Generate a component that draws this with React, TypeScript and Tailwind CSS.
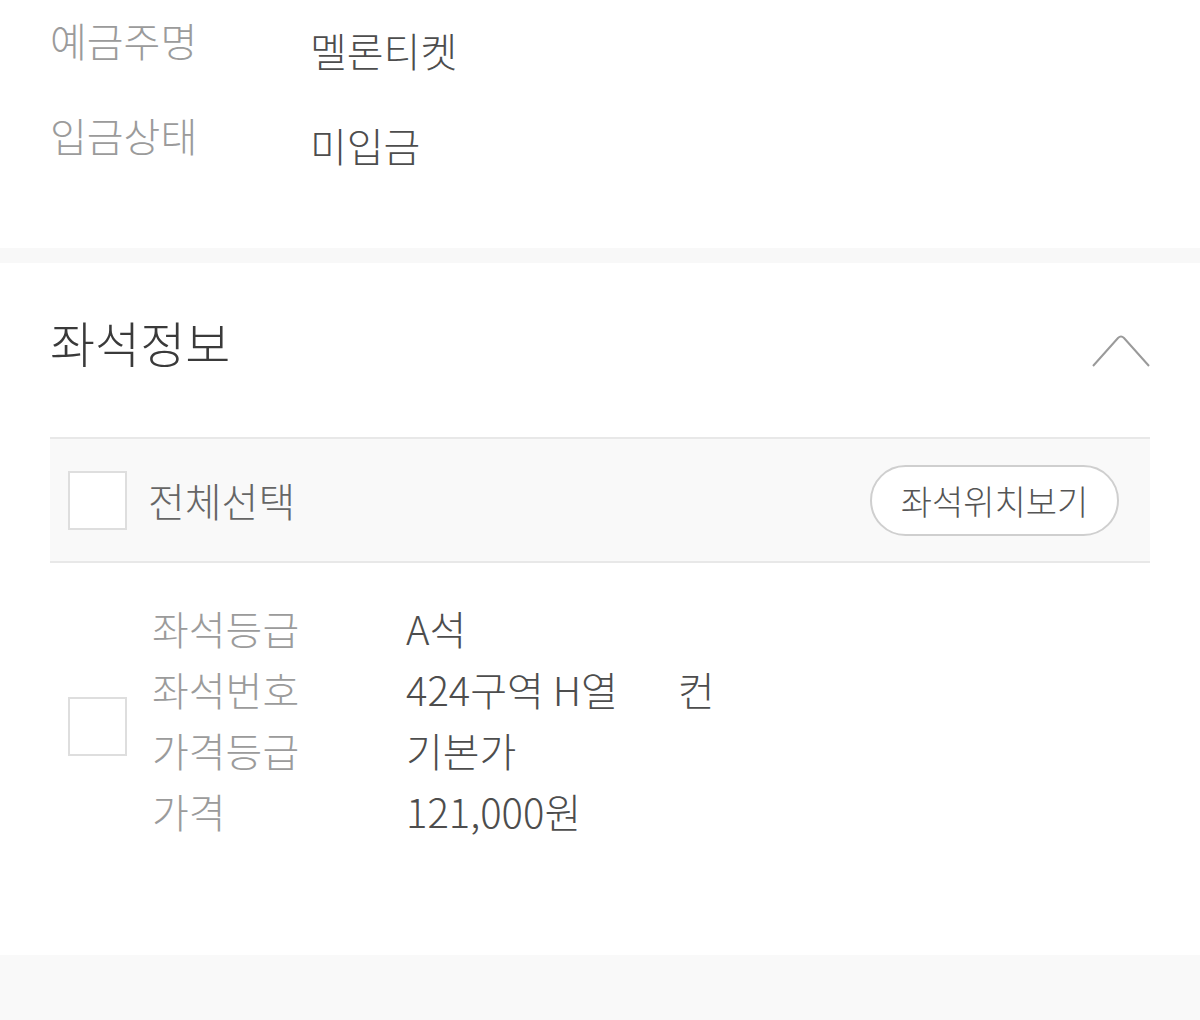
import { useState } from 'react';

type Seat = {
  grade: string;
  number: string;
  suffix: string;
  priceGrade: string;
  price: string;
};

const seat: Seat = {
  grade: 'A석',
  number: '424구역 H열',
  suffix: '컨',
  priceGrade: '기본가',
  price: '121,000원',
};

const font = { fontFamily: '"Noto Sans CJK KR", "Noto Sans", sans-serif' };

function Box({ checked, onClick }: { checked: boolean; onClick: () => void }) {
  return (
    <button
      type="button"
      onClick={onClick}
      className={`h-[59px] w-[59px] shrink-0 border-2 border-[#dedede] ${checked ? 'bg-[#eee]' : 'bg-white'}`}
    />
  );
}

export default function App() {
  const [all, setAll] = useState(false);
  const [one, setOne] = useState(false);

  return (
    <div style={font} className="min-h-[1020px] w-[1200px] bg-white font-light">
      <section className="h-[248px] px-[50px] pt-[18px]">
        <div className="flex">
          <p className="w-[260px] text-[40px] leading-[44px] text-[#9b9b9b]">예금주명</p>
          <p className="pt-[10px] text-[40px] leading-[44px] text-[#4d4d4d]">멜론티켓</p>
        </div>
        <div className="mt-[41px] flex">
          <p className="w-[260px] text-[40px] leading-[44px] text-[#9b9b9b]">입금상태</p>
          <p className="pt-[10px] text-[40px] leading-[44px] text-[#4d4d4d]">미입금</p>
        </div>
      </section>

      <div className="h-[15px] bg-[#f8f8f8]" />

      <section className="h-[692px] px-[50px] pt-[51px]">
        <div className="flex items-center justify-between">
          <h2 className="text-[49px] leading-[56px] text-[#3a3a3a]">좌석정보</h2>
          <svg width="58" height="34" viewBox="0 0 58 34" fill="none" className="mt-[18px]">
            <path d="M1 32 L26 4 Q29 1 32 4 L57 32" stroke="#9a9a9a" strokeWidth="2" />
          </svg>
        </div>

        <div className="mt-[67px] flex h-[126px] items-center justify-between border-y-2 border-[#e8e8e8] bg-[#f9f9f9] pl-[18px] pr-[31px]">
          <div className="flex items-center gap-[21px]">
            <Box checked={all} onClick={() => setAll(!all)} />
            <span className="text-[40px] leading-[44px] text-[#666]">전체선택</span>
          </div>
          <button
            type="button"
            className="flex h-[71px] w-[249px] items-center justify-center rounded-full border-2 border-[#cfcfcf] bg-white text-[34px] text-[#555]"
          >
            좌석위치보기
          </button>
        </div>

        <div className="flex items-center pl-[18px] pt-[35px]">
          <div className="mt-[16px]">
            <Box checked={one} onClick={() => setOne(!one)} />
          </div>
          <dl className="ml-[25px] grid grid-cols-[254px_1fr] text-[40px] leading-[61px]">
            <dt className="text-[#9b9b9b]">좌석등급</dt>
            <dd className="text-[#4d4d4d]">{seat.grade}</dd>
            <dt className="text-[#9b9b9b]">좌석번호</dt>
            <dd className="text-[#4d4d4d]">
              {seat.number}
              <span className="ml-[60px]">{seat.suffix}</span>
            </dd>
            <dt className="text-[#9b9b9b]">가격등급</dt>
            <dd className="text-[#4d4d4d]">{seat.priceGrade}</dd>
            <dt className="text-[#9b9b9b]">가격</dt>
            <dd className="text-[#4d4d4d]">{seat.price}</dd>
          </dl>
        </div>
      </section>

      <div className="h-[65px] bg-[#f9f9f9]" />
    </div>
  );
}
